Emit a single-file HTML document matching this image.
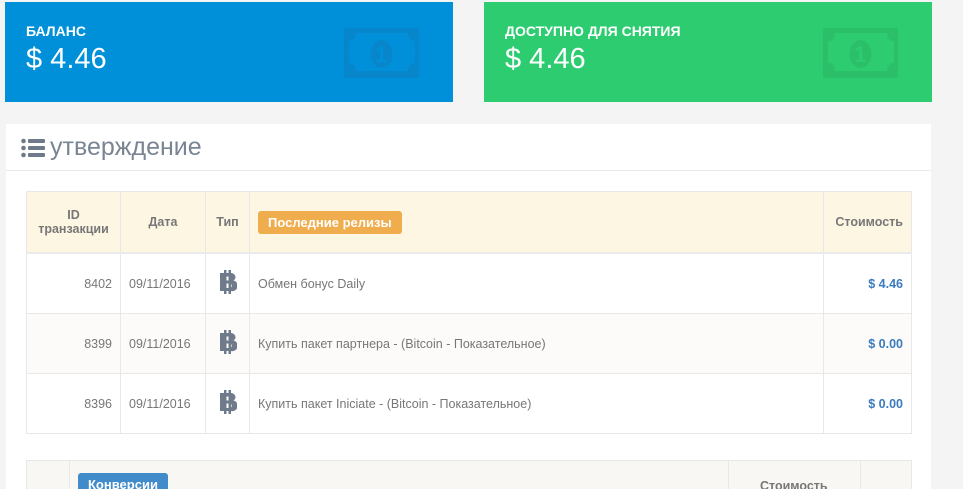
<!DOCTYPE html><html><head><meta charset="utf-8"><style>
html,body{margin:0;width:963px;height:489px;overflow:hidden}
body{background:#f4f4f4;font-family:"Liberation Sans",sans-serif;position:relative}
.box{position:absolute;top:2px;height:100px;width:448px;color:#fff}
.box .t{position:absolute;left:21px;top:21px;font-size:14px;font-weight:bold}
.box .v{position:absolute;left:21px;top:41px;font-size:29px;font-weight:300}
.box svg{position:absolute;left:339px;top:26px}
.panel{position:absolute;left:6px;top:124px;width:925px;height:365px;background:#fff;overflow:hidden}
.ph{height:46px;border-bottom:1px solid #ebebeb;font-size:25px;color:#7a8593;line-height:46px;padding-left:15px;position:relative}
table{border-collapse:collapse;position:absolute;left:20px;font-size:12.5px;color:#777}
td,th{border:1px solid #e8e8e8;padding:0 8px}
th{background:#fcf6e3;color:#777;font-weight:bold;height:60px}
tr.h th{border-bottom:2px solid #ebebeb}
td{height:59px}
.n{text-align:right}
.c{color:#3a7bbf;font-weight:bold;text-align:right}
.b{text-align:center}
.badge{display:inline-block;background:#f0ad4e;color:#fff;font-weight:bold;padding:4px 10px;border-radius:3px;font-size:13px}
</style></head><body>
<div class="box" style="left:5px;background:#0090d9"><div class="t">БАЛАНС</div><div class="v">$ 4.46</div>
<svg width="76" height="52" viewBox="0 0 76 52"><rect x="0" y="0" width="75" height="50" rx="2" fill="#0786cb"/><path d="M12 5h52q0 8 7 8v22q-7 0-7 8H12q0-8-7-8V13q7 0 7-8z" fill="#0090d9"/><ellipse cx="37.5" cy="26" rx="11" ry="14" fill="#0786cb"/><text x="31" y="34" font-size="22" font-weight="bold" fill="#0090d9">1</text></svg></div>
<div class="box" style="left:484px;background:#2ecc71"><div class="t">ДОСТУПНО ДЛЯ СНЯТИЯ</div><div class="v">$ 4.46</div>
<svg width="76" height="52" viewBox="0 0 76 52"><rect x="0" y="0" width="75" height="50" rx="2" fill="#2bbf69"/><path d="M12 5h52q0 8 7 8v22q-7 0-7 8H12q0-8-7-8V13q7 0 7-8z" fill="#2ecc71"/><ellipse cx="37.5" cy="26" rx="11" ry="14" fill="#2bbf69"/><text x="31" y="34" font-size="22" font-weight="bold" fill="#2ecc71">1</text></svg></div>
<div class="panel"><div class="ph"><svg width="24" height="20" viewBox="0 0 24 20" style="position:absolute;left:15px;top:14px"><g fill="#6f7b8a"><circle cx="2.5" cy="3" r="2.3"/><circle cx="2.5" cy="10" r="2.3"/><circle cx="2.5" cy="17" r="2.3"/><rect x="7" y="1" width="17" height="4" rx="1"/><rect x="7" y="8" width="17" height="4" rx="1"/><rect x="7" y="15" width="17" height="4" rx="1"/></g></svg><span style="margin-left:29px">утверждение</span></div>
<table style="top:67px;width:886px">
<tr class="h"><th style="width:77px">ID<br>транзакции</th><th style="width:68px">Дата</th><th style="width:27px">Тип</th><th style="text-align:left"><span class="badge">Последние релизы</span></th><th style="width:71px;text-align:right">Стоимость</th></tr>
<tr><td class="n">8402</td><td>09/11/2016</td><td class="b"><svg width="18" height="24" viewBox="0 0 18 24"><g fill="#6f7b8a"><rect x="5" y="0" width="2.5" height="24"/><rect x="9.5" y="0" width="2.5" height="24"/><path d="M1 3h10a5 4.2 0 0 1 3.5 7.5 5.5 5.2 0 0 1-3 10.5H1zM5 6.5v4h5a2 2 0 0 0 0-4zM5 13.5v4.5h5.5a2.25 2.25 0 0 0 0-4.5z" fill-rule="evenodd"/></g></svg></td><td>Обмен бонус Daily</td><td class="c">$ 4.46</td></tr>
<tr style="background:#fcfbf9"><td class="n">8399</td><td>09/11/2016</td><td class="b"><svg width="18" height="24" viewBox="0 0 18 24"><g fill="#6f7b8a"><rect x="5" y="0" width="2.5" height="24"/><rect x="9.5" y="0" width="2.5" height="24"/><path d="M1 3h10a5 4.2 0 0 1 3.5 7.5 5.5 5.2 0 0 1-3 10.5H1zM5 6.5v4h5a2 2 0 0 0 0-4zM5 13.5v4.5h5.5a2.25 2.25 0 0 0 0-4.5z" fill-rule="evenodd"/></g></svg></td><td>Купить пакет партнера - (Bitcoin - Показательное)</td><td class="c">$ 0.00</td></tr>
<tr><td class="n">8396</td><td>09/11/2016</td><td class="b"><svg width="18" height="24" viewBox="0 0 18 24"><g fill="#6f7b8a"><rect x="5" y="0" width="2.5" height="24"/><rect x="9.5" y="0" width="2.5" height="24"/><path d="M1 3h10a5 4.2 0 0 1 3.5 7.5 5.5 5.2 0 0 1-3 10.5H1zM5 6.5v4h5a2 2 0 0 0 0-4zM5 13.5v4.5h5.5a2.25 2.25 0 0 0 0-4.5z" fill-rule="evenodd"/></g></svg></td><td>Купить пакет Iniciate - (Bitcoin - Показательное)</td><td class="c">$ 0.00</td></tr>
</table>
<div style="position:absolute;left:20px;top:336px;width:884px;height:40px;background:#f8f7f4;border:1px solid #e8e8e8;border-bottom:0;font-size:12.5px;color:#777;font-weight:bold">
<div style="position:absolute;left:42px;top:0;bottom:0;border-left:1px solid #e8e8e8"></div>
<div style="position:absolute;left:701px;top:0;bottom:0;border-left:1px solid #e8e8e8"></div>
<div style="position:absolute;left:833px;top:0;bottom:0;border-left:1px solid #e8e8e8"></div>
<span class="badge" style="position:absolute;left:51px;top:12px;background:#428bca">Конверсии</span>
<span style="position:absolute;left:733px;top:18px">Стоимость</span>
</div>
</div>
</body></html>
